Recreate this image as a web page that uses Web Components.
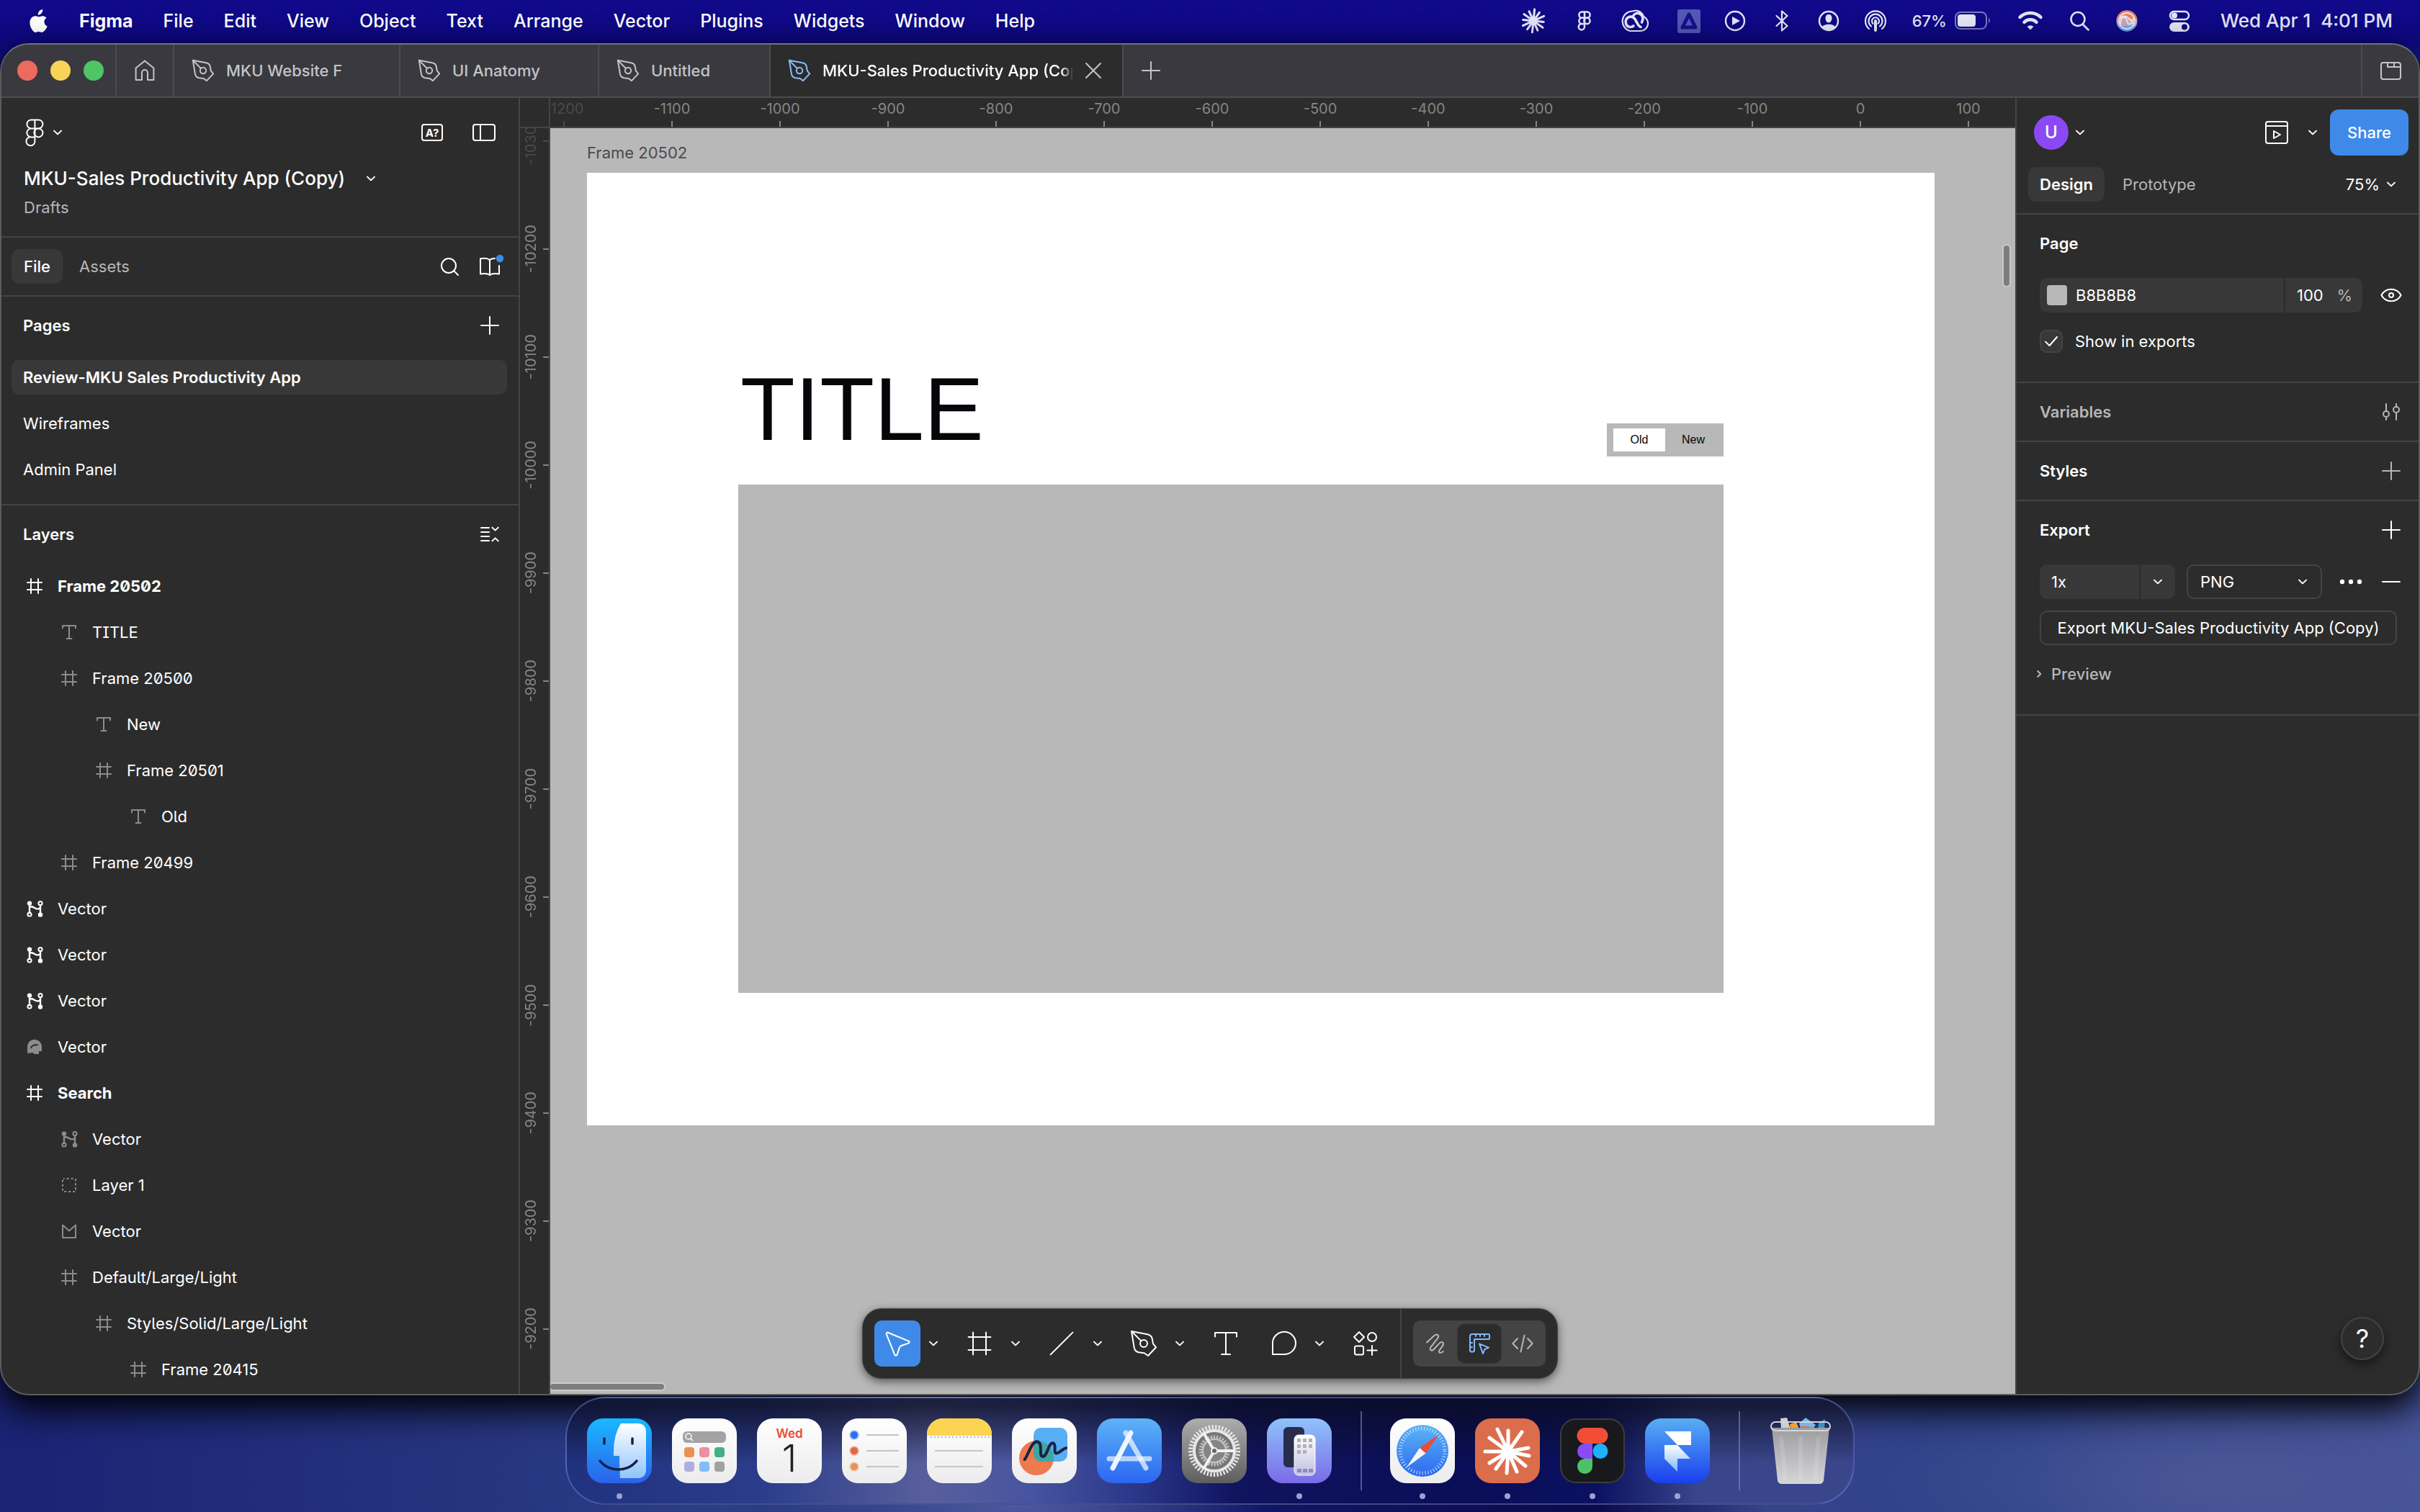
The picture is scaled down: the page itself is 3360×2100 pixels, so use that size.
<!DOCTYPE html>
<html lang="en">
<head>
<meta charset="utf-8">
<title>MKU-Sales Productivity App (Copy)</title>
<style>
	html, body {
		margin: 0;
		height: 100%;
	}
	body {
		font-family: Inter, "Liberation Sans", sans-serif;
		font-size: 22px;
		line-height: 32px;
		color: #fff;
		overflow: hidden;
	}
</style>
</head>
<body>
<mac-desktop>
	<mac-menubar slot="menubar"></mac-menubar>
	<app-window>
		<tab-strip slot="tabs">
			<file-tab style="--basis: 314px">MKU Website F</file-tab>
			<file-tab style="--basis: 276px">UI Anatomy</file-tab>
			<file-tab style="--basis: 238px">Untitled</file-tab>
			<file-tab style="--basis: 490px" active>MKU-Sales Productivity App (Copy)</file-tab>
		</tab-strip>
		<file-sidebar slot="left">
			<layer-row icon="frame" top strong>Frame 20502</layer-row>
			<layer-row icon="text" depth="1">TITLE</layer-row>
			<layer-row icon="frame" depth="1">Frame 20500</layer-row>
			<layer-row icon="text" depth="2">New</layer-row>
			<layer-row icon="frame" depth="2">Frame 20501</layer-row>
			<layer-row icon="text" depth="3">Old</layer-row>
			<layer-row icon="frame" depth="1">Frame 20499</layer-row>
			<layer-row icon="vector" top>Vector</layer-row>
			<layer-row icon="vector" top>Vector</layer-row>
			<layer-row icon="vector" top>Vector</layer-row>
			<layer-row icon="shape">Vector</layer-row>
			<layer-row icon="frame" top strong>Search</layer-row>
			<layer-row icon="vector" depth="1">Vector</layer-row>
			<layer-row icon="group" depth="1">Layer 1</layer-row>
			<layer-row icon="outline" depth="1">Vector</layer-row>
			<layer-row icon="frame" depth="1">Default/Large/Light</layer-row>
			<layer-row icon="frame" depth="2">Styles/Solid/Large/Light</layer-row>
			<layer-row icon="frame" depth="3">Frame 20415</layer-row>
		</file-sidebar>
		<design-canvas>
			<tool-bar slot="toolbar"></tool-bar>
		</design-canvas>
		<design-inspector slot="right"></design-inspector>
	</app-window>
	<mac-dock slot="dock"></mac-dock>
</mac-desktop>

<script>
// name: [ width, height, viewBox, markup ]
const PEN = '<path d="M3.5 3.5 14.6 5.6Q17.4 6.2 17.9 8.8L18.5 12.2 20.5 14.6 15 20.5 12.4 18.6 8.6 18.1Q5.9 17.6 5.4 15Z"/><path d="m3.5 3.5 6.7 6.7"/><circle cx="12" cy="12" r="2.5"/>';
const FIGMA = '<path d="M12 4H9.5a3 3 0 0 0 0 6H12zM12 4h2.5a3 3 0 0 1 0 6H12zM12 10H9.5a3 3 0 0 0 0 6H12zM9.5 16a3 3 0 1 0 2.5 3v-3z"/><circle cx="14.5" cy="13" r="3"/>';
const rays = ( n, r1, r2 ) => Array.from( { length: n }, ( _, i ) => {
	const a = ( i * 2 * Math.PI ) / n + 0.1;
	const r = i % 2 ? r2 : r2 * 0.9;
	return `M${ ( Math.cos( a ) * r1 ).toFixed( 1 ) } ${ ( Math.sin( a ) * r1 ).toFixed( 1 ) }L${ ( Math.cos( a ) * r ).toFixed( 1 ) } ${ ( Math.sin( a ) * r ).toFixed( 1 ) }`;
} ).join( '' );

const ICONS = {
	// Editor chrome.
	chevron: [ 16, 48, '0 0 8 24', '<path d="m1.5 10.8 2.5 2.4 2.5-2.4"/>' ],
	'chevron-right': [ 16, 48, '0 0 8 24', '<path d="m2.6 10 2 2-2 2"/>' ],
	plus: [ 48, 48, '0 0 24 24', '<path d="M12 6v12M6 12h12"/>' ],
	minus: [ 48, 48, '0 0 24 24', '<path d="M6 12h12"/>' ],
	close: [ 32, 32, '0 0 16 16', '<path d="m3 3 10 10M13 3 3 13"/>' ],
	dots: [ 48, 48, '0 0 24 24', '<g fill="currentColor" stroke="none"><circle cx="6" cy="12" r="1.6"/><circle cx="12" cy="12" r="1.6"/><circle cx="18" cy="12" r="1.6"/></g>' ],
	home: [ 40, 40, '0 0 20 20', '<path d="M3.8 8.3 10 3.2l6.2 5.1v8.2H12v-5a2 2 0 0 0-4 0v5H3.8z"/>' ],
	nib: [ 40, 40, '0 0 24 24', `<g stroke-width="1.2">${ PEN }</g>` ],
	windows: [ 40, 40, '0 0 20 20', '<rect x="3.5" y="4.5" width="13.5" height="11.5" rx="1.5"/><path d="M8 4.5v3h9M12.5 4.5v3"/>' ],
	figma: [ 48, 48, '0 0 24 24', `<g transform="translate(.2 -.8)">${ FIGMA }</g>` ],
	missing: [ 32, 32, '0 0 16 16', '<rect x="1" y="2.5" width="14" height="11" rx="1.5"/><text x="8" y="11" text-anchor="middle" font-family="Inter" font-size="7.5" font-weight="700" fill="currentColor" stroke="none">A?</text>' ],
	panel: [ 48, 48, '0 0 24 24', '<rect x="4.5" y="6.5" width="15" height="11" rx="1.5"/><path d="M9.5 6.5v11"/>' ],
	search: [ 48, 48, '0 0 24 24', '<circle cx="11.5" cy="11.5" r="5"/><path d="m15.2 15.2 2.8 2.8"/>' ],
	library: [ 48, 48, '0 0 24 24', '<path d="M15.5 6.5c-1.8-.2-2.8.3-3.5 1.2-.9-1.1-3-1.6-6.5-1.1v10.6c3-.4 5.3-.2 6.5.9 1.2-1.1 3.5-1.3 6.5-.9v-5.700M12 7.700v10.400"/><circle cx="19" cy="6.5" r="2.6" fill="#3d8ced" stroke="none"/>' ],
	collapse: [ 48, 48, '0 0 24 24', '<path d="M6 7.5h5.5M6 10.5h5.5M6 13.5h5.5M6 16.5h5.5M13.7 7.3l2.1 2 2.1-2M13.7 16.7l2.1-2 2.1 2"/>' ],
	frame: [ 32, 32, '0 0 16 16', '<path d="M5.5 3v10M10.5 3v10M3 5.5h10M3 10.5h10"/>' ],
	text: [ 32, 32, '0 0 16 16', '<path d="M3.5 5.2V3.5h9v1.7M8 3.5v9M6.3 12.5h3.4"/>' ],
	vector: [ 32, 32, '0 0 16 16', '<path d="M4.5 4v7M12 5.5v6.5M4.5 7c1.2-.7 1.8-.5 3.5.5s2.8 1 4 0" stroke-width="1.2"/><g fill="currentColor" stroke="none"><circle cx="4.5" cy="4.3" r="1.6"/><circle cx="12" cy="12.2" r="1.6"/></g><circle cx="4.5" cy="12" r="1.3"/><circle cx="12" cy="4.3" r="1.3"/>' ],
	shape: [ 32, 32, '0 0 16 16', '<path d="M3 12.500V8a5 5 0 0 1 10-.3V11h-2v2H7.800l-1-1z" fill="currentColor" stroke="none"/><path d="M5.5 8.6c.7-1.8 2-2.2 4.5-2" stroke="#2c2c2c"/>' ],
	group: [ 32, 32, '0 0 16 16', '<rect x="3.5" y="3.5" width="9" height="9" rx=".5" stroke-linecap="butt" stroke-dasharray="1.5 1.5" stroke-dashoffset=".7"/>' ],
	outline: [ 32, 32, '0 0 16 16', '<path d="M3.5 3.8V12.500h9V3.800L8 7.700z"/>' ],
	present: [ 48, 48, '0 0 24 24', '<rect x="4.5" y="4.5" width="15" height="15" rx="1.5"/><path d="M4.5 7.5h15M10 11v5l4.5-2.5z"/>' ],
	eye: [ 48, 48, '0 0 24 24', '<path d="M5.2 12c3-5.5 10.6-5.5 13.6 0-3 5.5-10.6 5.5-13.6 0z"/><circle cx="12" cy="12" r="1.5"/>' ],
	check: [ 32, 32, '0 0 16 16', '<path d="m4 8.3 2.8 2.7 5.2-6"/>' ],
	sliders: [ 48, 48, '0 0 24 24', '<path d="M8.5 6.5v5M8.5 15.5v2M15.5 6.5v2M15.5 12.5v5"/><circle cx="8.5" cy="13.5" r="2"/><circle cx="15.5" cy="10.5" r="2"/>' ],

	// Tool bar.
	move: [ 48, 48, '0 0 24 24', '<path d="M5.4 4.4 19.8 10.3Q20.9 11 19.7 11.8L14.7 13.5Q13.8 13.9 13.4 14.8L11.8 19.8Q10.9 21 10.1 19.8L4.4 5.6Q4.1 4.2 5.4 4.4Z"/>' ],
	'frame-tool': [ 48, 48, '0 0 24 24', '<path d="M7.5 4.3v15.4M16.5 4.3v15.4M4.3 7.5h15.4M4.3 16.5h15.4"/>' ],
	line: [ 48, 48, '0 0 24 24', '<path d="M4.3 19.7 19.7 4.3"/>' ],
	pen: [ 48, 48, '0 0 24 24', PEN ],
	type: [ 48, 48, '0 0 24 24', '<path d="M4.5 7.3V4.5h15v2.8M12 4.5v15M9 19.5h6"/>' ],
	comment: [ 48, 48, '0 0 24 24', '<path d="M4.5 19.5V12a8 7.8 0 1 1 8 7.5z"/>' ],
	actions: [ 48, 48, '0 0 24 24', '<path d="M7.5 4l3.5 3.5L7.5 11 4 7.5zM16.5 13.5v6.5M13.2 16.7h6.6"/><circle cx="16.5" cy="7.5" r="3"/><rect x="4.5" y="13.7" width="6" height="6" rx="1"/>' ],
	draw: [ 48, 48, '0 0 24 24', '<path d="M5.5 11.2 10.5 6.6c2.2-1.9 4-.3 2.5 1.800l-4.800 6.200c-1.200 1.900.7 3 2.200 1.400l4-4.300c1.600-1.600 3.300-.2 2.200 1.700l-2.300 3.200c-1 1.600.4 2.700 2.600.9"/>' ],
	design: [ 40, 40, '0 0 20 20', '<path d="M16 3.5H5A1.5 1.5 0 0 0 3.5 5v9.700a1 1 0 0 0 1 1h1a1 1 0 0 0 1-1V7h9.700a.8.8 0 0 0 .8-.8V4.3a.8.8 0 0 0-1-.8zM7.500 3.500v1.500M10.500 3.500v1.500M13.500 3.500v1.500M3.500 9.500H5M3.500 12.500H5M10 10.200l6.500 2.600-2.800 1.200-1.200 3z"/>' ],
	code: [ 40, 40, '0 0 20 20', '<path d="m6.5 6.5-3.3 3.5 3.3 3.5M13.5 6.5l3.3 3.5-3.3 3.5M11.3 4.2 8.7 15.8"/>' ],

	// Menu bar.
	apple: [ 28, 34, '0 0 28 34', '<path fill="currentColor" stroke="none" d="M19.3 1c.2 2.2-.7 4.2-1.9 5.6-1.3 1.5-3 2.3-4.7 2.2-.2-2 .7-4.100 1.800-5.400C15.800 2 17.700 1.100 19.300 1zM25.700 24.500c-.9 2-1.300 2.900-2.500 4.600-1.600 2.400-3.500 3.900-5.300 3.900-1.600 0-2.200-1-4.300-1s-2.700 1-4.300 1c-1.900 0-3.500-1.800-5-4.200C.9 23.600.5 16.900 3.200 13.500c1.600-2.200 4-3.300 6-3.300 2.100 0 3.400 1.100 5 1.100s2.700-1.100 5.100-1.100c1.900 0 3.900 1 5.200 2.800-4.600 2.500-3.900 9.300 1.200 11.500z"/>' ],
	burst: [ 52, 34, '-26 -17 52 34', `<path stroke-width="3" d="${ rays( 12, 1, 16 ) }"/>` ],
	'figma-menu': [ 18, 34, '5.5 1.5 13 23', `<g stroke-width="1.8">${ FIGMA }</g>` ],
	cloud: [ 50, 34, '-25 -17 50 34', '<path stroke-width="2.2" d="M-7 14H8A10.5 10.5 0 0 0 12-6 11.5 11.5 0 0 0-3-13.5 14 14 0 0 0-7 14z"/><path stroke-width="3.6" d="M8 8.500c-2-.5-3-2-4-4L0-2.500C-2-5.500-5-6.500-8-5.500-15-3-14 7.500-7 8.500c2 .3 3.500-.3 5-1.500M-3-6c2-4 6-5.500 9.500-4 5 2 5.500 8 3 12"/>' ],
	drive: [ 28, 34, '-14 -17 28 34', '<rect x="-16" y="-16" width="32" height="33" rx="3" fill="#5358b4" stroke="none"/><path d="M0-9-9 9H9z" stroke="#16108c" stroke-width="5"/>' ],
	play: [ 28, 34, '-14 -17 28 34', '<circle r="13" stroke-width="2.4"/><path d="M-4-6v12L7 0z" fill="currentColor" stroke="none"/>' ],
	bluetooth: [ 30, 34, '-15 -17 30 34', '<path stroke-width="2.2" d="M-7.5-7 7.5 7 0 13.5v-27L7.500-7-7.500 7"/>' ],
	user: [ 28, 34, '-14 -17 28 34', '<circle r="13" stroke-width="2.4"/><path fill="currentColor" stroke="none" d="M0-9c3 0 4.5 2.3 4.5 5S3 2.5 0 2.5-4.5-1-4.5-4-3-9 0-9zM-9.500 8.500C-6 3.500 6 3.500 9.500 8.500 5 14-5 14-9.500 8.500z"/>' ],
	airdrop: [ 30, 34, '-15 -17 30 34', '<g stroke-width="2.2"><path d="M-9 11a14 14 0 1 1 18 0M-6 7.500a9.500 9.500 0 1 1 12 0M-3.500 3.800a5 5 0 1 1 7 0"/></g><path d="M0 0v13" stroke-width="4"/>' ],
	battery: [ 52, 28, '0 0 52 28', '<rect x="2" y="2" width="43" height="23" rx="7" stroke-opacity=".5" stroke-width="2"/><rect x="5" y="5" width="25" height="17" rx="4" fill="currentColor" stroke="none"/><path d="M48 9.500q3.500 4 0 8z" fill="currentColor" fill-opacity=".5" stroke="none"/>' ],
	wifi: [ 36, 34, '-18 -17 36 34', '<g stroke-width="4.5"><path d="M-14.500-5a20.500 20.500 0 0 1 29 0M-8.500 1.800a12 12 0 0 1 17 0"/></g><path d="M0 12.500-4.500 8q4.500-3.500 9 0z" fill="currentColor" stroke="none"/>' ],
	spotlight: [ 28, 34, '-14 -17 28 34', '<circle cx="-2" cy="-2.5" r="9.5" stroke-width="2.5"/><path d="m5 5 7.5 7.5" stroke-width="2.8"/>' ],
	siri: [ 32, 34, '-16 -17 32 34', '<circle r="14.5" fill="#c9a2b8" stroke="none"/><path d="M-14.2-3A14.5 14.5 0 0 1 14.2-3z" fill="#ef8055" stroke="none"/><path d="M-12.500 7.300A14.500 14.500 0 0 0 12.500 7.300z" fill="#5aa5f2" stroke="none"/><circle r="11" stroke-width="1.8"/><path d="M-9 4C-8-8-2-6 0 0s6 7 9-3M-9-4C-4-10 4-4 9 4" stroke-width="2.2"/>' ],
	control: [ 42, 34, '-21 -17 42 34', '<rect x="-13" y="-13" width="26" height="11" rx="5.5" stroke-width="2.4"/><circle cx="-7" cy="-7.5" r="4" fill="currentColor" stroke="none"/><rect x="-14" y="2" width="28" height="13" rx="6.5" fill="currentColor" stroke="none"/><circle cx="7" cy="8.5" r="4" fill="#100b80" stroke="none"/>' ],
};

// Artwork of the dock icons, each on a 90 x 90 tile.
const TILE = '<rect x="0" y="0" width="90" height="90" rx="22"';
const grad = ( id, from, to ) => `<linearGradient id="${ id }" x1="0" y1="0" x2="0" y2="1"><stop offset="0" stop-color="${ from }"/><stop offset="1" stop-color="${ to }"/></linearGradient>`;
const paper = `${ grad( 'p', '#ffffff', '#ececee' ) }${ TILE } fill="url(#p)"/>`;
const square = ( x, y, c ) => `<rect x="${ x }" y="${ y }" width="14" height="14" rx="4" fill="${ c }"/>`;
const DOCK = {
	Finder: grad( 'a', '#19b9ff', '#2b62ea' ) + grad( 'b', '#ffffff', '#8fc4fb' ) + `
		${ TILE } fill="url(#a)"/>
		<path d="M52 7h18q12 0 12 12v52q0 12-12 12H46q-1-16-1-31H37Q36 24 47 7z" fill="url(#b)"/>
		<path d="M24 28v7M63 28v7" stroke="#16233f" stroke-width="3.5" stroke-linecap="round"/>
		<path d="M18 59c13 16 38 16 51 0" fill="none" stroke="#16204a" stroke-width="3.5" stroke-linecap="round"/>`,
	Apps: paper + `
		<rect x="15" y="18" width="60" height="16" rx="6" fill="#a3a3a3"/>
		<circle cx="23" cy="25" r="4" fill="none" stroke="#fff" stroke-width="1.5"/><path d="m26 28 3 3" stroke="#fff" stroke-width="1.5"/>
		${ square( 17, 40, '#ec9050' ) }${ square( 38, 40, '#ec8fa0' ) }${ square( 59, 40, '#42b184' ) }
		${ square( 17, 60, '#b3addb' ) }${ square( 38, 60, '#83bcf8' ) }${ square( 59, 60, '#a2a2a2' ) }`,
	Calendar: paper + `
		<g font-family="Inter" text-anchor="middle"><text x="45" y="27" font-size="17" font-weight="600" fill="#ee4a35">Wed</text>
		<text x="45" y="74" font-size="52" font-weight="300" fill="#222">1</text></g>`,
	Reminders: paper + `
		<path d="M34 23h45M34 45h45M34 67h45" stroke="#c3c4c6" stroke-width="2"/>
		<g stroke-opacity=".4" stroke-width="3"><circle cx="17" cy="23" r="5.5" fill="#2f6df3" stroke="#5b9cf8"/><circle cx="17" cy="45" r="5.5" fill="#e0664a" stroke="#ee9058"/><circle cx="17" cy="67" r="5.5" fill="#e9905c" stroke="#f2b780"/></g>`,
	Notes: paper + `
		<path d="M0 24V22A22 22 0 0 1 22 0h46a22 22 0 0 1 22 22v2z" fill="#fbd551"/>
		<path d="M5 26h82" stroke="#b9b9b9" stroke-width="2" stroke-dasharray="2 3"/><path d="M11 45h67M11 67h67" stroke="#c6c7c9" stroke-width="2"/>`,
	Freeform: paper + `
		<circle cx="34" cy="55" r="24" fill="#ee7a4e"/><rect x="30" y="13" width="47" height="47" rx="10" fill="#58aef2"/><path d="M30 31.300a24 24 0 0 1 28 23.700v5H40a10 10 0 0 1-10-10z" fill="#41a5a0"/>
		<path d="M18 58c5-6 9-28 18-25 7 3 1 20 7 20 7 0 7-21 14-19 5 2 0 14 5 14 5-1 7-6 13-8" transform="rotate(2 45 45)" fill="none" stroke="#192345" stroke-width="4" stroke-linecap="round"/>`,
	'App Store': grad( 'a', '#5db4f7', '#2b66f2' ) + `
		${ TILE } fill="url(#a)"/>
		<g stroke="#eef6ff" stroke-width="7" stroke-linecap="round"><path d="M47 20 22 69" /><path d="M40 20 68 69" stroke-opacity=".75"/><path d="M17 56h56" stroke-opacity=".7"/></g>`,
	'System Settings': grad( 'a', '#adadad', '#5e5e5e' ) + `
		${ TILE } fill="url(#a)"/><circle cx="45" cy="45" r="27" fill="#777"/>
		<g fill="none" stroke="#e8e8e8"><circle cx="45" cy="45" r="33" stroke-width="6" stroke-dasharray="2.3 2.3"/><circle cx="45" cy="45" r="28" stroke-width="4"/></g>
		<circle cx="45" cy="45" r="19" fill="#8a8a8a" stroke="#c4c4c4" stroke-width="5" stroke-dasharray="2 2"/><circle cx="45" cy="45" r="16" fill="#858585" stroke="#c4c4c4" stroke-width="2"/>
		<path d="M45 45h29M45 45 30 20M45 45 30 70" stroke="#f1f1f1" stroke-width="4"/><circle cx="45" cy="45" r="4" fill="#666" stroke="#f1f1f1" stroke-width="2"/>`,
	'iPhone Mirroring': grad( 'a', '#8fc3fa', '#7a6ae8' ) + grad( 'b', '#ffffff', '#bfc0de' ) + `
		${ TILE } fill="url(#a)"/><rect x="23" y="12" width="29" height="56" rx="6" fill="#282d4d"/>
		<rect x="38" y="23" width="29" height="56" rx="6" fill="url(#b)" stroke="#fff"/>
		<g fill="#b0b0b6"><path d="M42 28h5v5h-5zM50 28h5v5h-5zM58 28h5v5h-5zM42 36h5v5h-5zM50 36h5v5h-5zM58 36h5v5h-5zM42 44h5v5h-5zM50 44h5v5h-5z"/><path fill="#8f88c5" d="M42 70h6v5h-6zM50 70h6v5h-6zM58 70h6v5h-6z"/></g>`,
	Safari: grad( 'a', '#5bb5f6', '#2c68ee' ) + paper + `
		<circle cx="45" cy="45" r="36" fill="url(#a)"/><circle cx="45" cy="45" r="31" fill="none" stroke="#cfe5fd" stroke-width="5" stroke-dasharray="1 3"/>
		<path d="M68 22 49.500 48.500 41 41z" fill="#ee4b36"/><path d="M23 68 41 41l8.500 7.500z" fill="#f4f6fa"/>`,
	Claude: `${ TILE } fill="#dc6d4c"/>
		<path d="M46 46 31 15M46 46V17M46 46 65 19M46 46 74 41M46 46 75 52M46 46 70 66M46 46 58 74M46 46 44 76M46 46 29 70M46 46 20 62M46 46 14 46M46 46 20 27" stroke="#fff" stroke-width="5" stroke-linecap="round"/>`,
	Figma: `<rect x="1" y="1" width="88" height="88" rx="21" fill="#17191d" stroke="#3c3c3e" stroke-width="2"/>
		<path d="M34.5 13H45v22H34.500a11 11 0 0 1 0-22z" fill="#f24e37"/><path d="M44.5 13h11a11 11 0 0 1 0 22h-11z" fill="#f24e37"/><path d="M34.5 35H45v21H34.500a10.500 10.500 0 0 1 0-21z" fill="#8a4bf7"/><circle cx="56" cy="45.5" r="10.5" fill="#1fb1fb"/><path d="M34.5 56H45v10.500A10.500 10.500 0 1 1 34.500 56z" fill="#4cc267"/>`,
	Framer: grad( 'a', '#58aef5', '#1a3fee' ) + grad( 'b', '#ffffff', '#7fb8f6' ) + `
		${ TILE } fill="url(#a)"/><path d="M27 18h37v19H45z" fill="#fff"/><path d="M27 37h18l18 19H45v18L27 56z" fill="url(#b)"/>`,
	Trash: grad( 'a', '#9d9d9f', '#d6d6d8' ) + `
		<path d="m17 0 9-1 5 16H18z" fill="#cfcfd1"/><path d="m30 8 9-3 5 12H31z" fill="#f0a232"/><path d="m43 7 9-8 14 10-6 8H46z" fill="#74b9f0"/><path d="M46 10 62 12 58 18H45z" fill="#ec7343"/><path d="m70 6 9-5-1 14h-9z" fill="#3a8fc8"/>
		<path d="M5 13h80l-8 73q-1 5-6 5H19q-5 0-6-5z" fill="url(#a)"/><rect x="4" y="5" width="82" height="12" rx="6" fill="none" stroke="#d5d5d7" stroke-width="2"/>
		<path d="M18 25 24 85M70 25l-5 60M45 25v60" stroke="#fff" stroke-opacity=".12" stroke-width="6"/>`,
};

/**
 * Base class: attaches a shadow root with the markup of render().
 */
class BaseElement extends HTMLElement {
	connectedCallback() {
		if ( this.shadowRoot ) {
			return;
		}
		const template = document.createElement( 'template' );
		template.innerHTML = `<style>
			:host, * { box-sizing: border-box; }
			button, input, select { font: inherit; color: inherit; background: none; border: 0; padding: 0; margin: 0; outline: 0; min-width: 0; }
			button { display: inline-flex; align-items: center; justify-content: center; white-space: nowrap; }
			a { color: inherit; text-decoration: none; }
			${ this.styles() }
		</style>${ this.render() }`;
		this.attachShadow( { mode: 'open' } );
		this.shadowRoot.appendChild( template.content.cloneNode( true ) );
	}

	styles() {
		return '';
	}

	render() {
		return '<slot></slot>';
	}
}

class UiIcon extends BaseElement {
	styles() {
		return `
			:host { display: inline-flex; flex: none; }
			svg { display: block; overflow: visible; fill: none; stroke: currentColor; stroke-width: 1; stroke-linejoin: round; stroke-linecap: round; }
		`;
	}

	render() {
		const [ width, height, box, markup ] = ICONS[ this.getAttribute( 'name' ) ];
		return `<svg width="${ width }" height="${ height }" viewBox="${ box }" aria-hidden="true">${ markup }</svg>`;
	}
}

class MacDesktop extends BaseElement {
	styles() {
		return `
			:host {
				display: flex;
				flex-direction: column;
				height: 100vh;
				background:
					linear-gradient(#100a8c 0, #0d0880 60px, transparent 160px),
					radial-gradient(ellipse 500px 160px at 92% 98%, #4a5796, transparent),
					radial-gradient(ellipse 360px 200px at 42% 99%, #4d5aa3, transparent),
					linear-gradient(90deg, #1a2374, #26347e 20%, #2c3f88 30%, #101566 52%, #0a0b4c 66%, #36448c 73%, #2c3f88 84%, #45539a);
			}
			.stage { flex: 1; min-height: 0; display: flex; }
			.dock { flex: none; height: 162px; display: flex; justify-content: center; align-items: flex-start; padding-top: 2px; position: relative; }
		`;
	}

	render() {
		return `
			<slot name="menubar"></slot>
			<main class="stage"><slot></slot></main>
			<div class="dock"><slot name="dock"></slot></div>
		`;
	}
}

class MacMenubar extends BaseElement {
	styles() {
		return `
			:host { display: flex; flex: none; height: 60px; align-items: center; justify-content: space-between; padding: 0 38px 2px 40px; font-size: 25px; font-weight: 500; }
			nav, .status { display: flex; align-items: center; white-space: pre; }
			nav { gap: 42px; }
			.status { gap: 36px; color: #e3e4f4; }
			b { font-weight: 700; }
			time { font-size: 26px; }
			.battery { display: flex; align-items: center; gap: 10px; font-size: 22px; }
		`;
	}

	render() {
		const menus = [ 'File', 'Edit', 'View', 'Object', 'Text', 'Arrange', 'Vector', 'Plugins', 'Widgets', 'Window', 'Help' ];
		const icons = [ 'burst', 'figma-menu', 'cloud', 'drive', 'play', 'bluetooth', 'user', 'airdrop' ];
		const icon = ( name ) => `<ui-icon name="${ name }"></ui-icon>`;
		return `
			<nav>
				${ icon( 'apple' ) }
				<button><b>Figma</b></button>
				${ menus.map( ( menu ) => `<button>${ menu }</button>` ).join( '' ) }
			</nav>
			<div class="status">
				${ icons.map( icon ).join( '' ) }
				<span class="battery">67%${ icon( 'battery' ) }</span>
				${ [ 'wifi', 'spotlight', 'siri', 'control' ].map( icon ).join( '' ) }
				<time>Wed Apr 1  4:01 PM</time>
			</div>
		`;
	}
}

class AppWindow extends BaseElement {
	styles() {
		return `
			:host { flex: 1; min-width: 0; display: flex; flex-direction: column; border: 2px solid #5c5c5c; border-top-color: #737376; border-radius: 40px; overflow: hidden; background: #2c2c2c; box-shadow: 0 18px 48px 2px #000; }
			.body { flex: 1; min-height: 0; display: grid; grid-template-columns: 720px 1fr 560px; }
		`;
	}

	render() {
		return `
			<slot name="tabs"></slot>
			<div class="body"><slot name="left"></slot><slot></slot><slot name="right"></slot></div>
		`;
	}
}

class TabStrip extends BaseElement {
	styles() {
		return `
			:host { display: flex; flex: none; height: 74px; background: #39393f; border-bottom: 2px solid #4c4c50; color: #c4c4c6; }
			.lights { display: flex; align-items: center; gap: 18px; padding: 0 16px 0 22px; border-right: 2px solid #4c4c50; }
			.lights button { width: 28px; height: 28px; border-radius: 50%; background: #ee6a5e; }
			.lights button:nth-child(2) { background: #f9d355; }
			.lights button:nth-child(3) { background: #4fc565; }
			.home, .overview { width: 80px; border-right: 2px solid #4c4c50; }
			.add { width: 76px; }
			.overview { margin-left: auto; border-right: 0; border-left: 2px solid #4c4c50; }
		`;
	}

	render() {
		return `
			<div class="lights">
				<button aria-label="Close"></button><button aria-label="Minimize"></button><button aria-label="Zoom"></button>
			</div>
			<button class="home" aria-label="Home"><ui-icon name="home"></ui-icon></button>
			<slot></slot>
			<button class="add" aria-label="New tab"><ui-icon name="plus"></ui-icon></button>
			<button class="overview" aria-label="All tabs"><ui-icon name="windows"></ui-icon></button>
		`;
	}
}

class FileTab extends BaseElement {
	styles() {
		return `
			:host { display: flex; flex: 0 1 var(--basis); min-width: 0; align-items: center; gap: 12px; padding: 0 24px 0 20px; border-right: 2px solid #4c4c50; font-weight: 500; white-space: nowrap; }
			:host([active]) { background: #2c2c2c; color: #fff; }
			:host([active]) .pen { color: #8cbcf8; }
			.name { flex: 1; min-width: 0; overflow: hidden; }
			:host([active]) .name { mask-image: linear-gradient(90deg, #000 calc(100% - 16px), transparent); }
			button { color: #c4c4c6; }
		`;
	}

	render() {
		const close = this.hasAttribute( 'active' ) ? '<button aria-label="Close tab"><ui-icon name="close"></ui-icon></button>' : '';
		return `<ui-icon class="pen" name="nib"></ui-icon><a href="#" class="name"><slot></slot></a>${ close }`;
	}
}

class FileSidebar extends BaseElement {
	styles() {
		return `
			:host { display: flex; flex-direction: column; min-height: 0; overflow: hidden; border-right: 2px solid #444; }
			section { border-bottom: 2px solid #444; flex: none; }
			section:last-child { border: 0; flex: 1; min-height: 0; }
			.bar { display: flex; align-items: center; height: 96px; padding: 0 24px 0 22px; }
			.bar .space { flex: 1; }
			.bar .missing { margin-right: 32px; }
			.name { display: flex; font-size: 26px; font-weight: 500; gap: 28px; height: 32px; padding-left: 31px; }
			.place { padding: 8px 31px 24px; color: #b6b6b6; }
			.tabs { display: flex; align-items: center; height: 82px; padding: 0 16px 0 14px; color: #b6b6b6; }
			.tabs .tab { height: 48px; padding: 0 17px; border-radius: 10px; }
			.tabs .on { background: #383838; color: #fff; font-weight: 500; margin-right: 6px; }
			.tabs .find { margin: 0 8px 0 auto; color: #fff; }
			.tabs .lib { color: #fff; }
			h2 { display: flex; align-items: center; justify-content: space-between; height: 80px; margin: 0; padding: 0 16px 0 30px; font-size: 22px; font-weight: 600; }
			.pages { padding-bottom: 16px; }
			.page { display: flex; align-items: center; height: 64px; padding: 8px 16px 8px 14px; }
			.page a { display: flex; align-items: center; flex: 1; height: 48px; padding: 0 16px; border-radius: 10px; }
			.page .on { background: #383838; font-weight: 600; }
		`;
	}

	render() {
		return `
			<section>
				<div class="bar">
					<button aria-label="Main menu"><ui-icon name="figma"></ui-icon></button>
					<ui-icon name="chevron"></ui-icon>
					<span class="space"></span>
					<button class="missing" aria-label="Missing fonts"><ui-icon name="missing"></ui-icon></button>
					<button aria-label="Minimize UI"><ui-icon name="panel"></ui-icon></button>
				</div>
				<button class="name">MKU-Sales Productivity App (Copy)<ui-icon name="chevron"></ui-icon></button>
				<div class="place">Drafts</div>
			</section>
			<section class="tabs">
				<button class="tab on">File</button>
				<button class="tab">Assets</button>
				<button class="find" aria-label="Find"><ui-icon name="search"></ui-icon></button>
				<button class="lib" aria-label="Libraries"><ui-icon name="library"></ui-icon></button>
			</section>
			<section class="pages">
				<h2>Pages<button aria-label="Add page"><ui-icon name="plus"></ui-icon></button></h2>
				<div class="page"><a class="on" href="#">Review-MKU Sales Productivity App</a></div>
				<div class="page"><a href="#">Wireframes</a></div>
				<div class="page"><a href="#">Admin Panel</a></div>
			</section>
			<section>
				<h2>Layers<button aria-label="Collapse layers"><ui-icon name="collapse"></ui-icon></button></h2>
				<slot></slot>
			</section>
		`;
	}
}

class LayerRow extends BaseElement {
	styles() {
		const depth = Number( this.getAttribute( 'depth' ) || 0 );
		return `
			:host { display: flex; align-items: center; gap: 16px; height: 64px; padding-left: ${ 30 + depth * 48 }px; white-space: nowrap; font-feature-settings: "zero", "ss02"; }
			:host([strong]) { font-weight: 700; }
			ui-icon { color: #8c8c8c; }
			:host([top]) ui-icon { color: #fff; }
		`;
	}

	render() {
		return `<ui-icon name="${ this.getAttribute( 'icon' ) }"></ui-icon><slot></slot>`;
	}
}

/**
 * Ruler along the top or the left side of the canvas.
 */
class CanvasRuler extends BaseElement {
	styles() {
		return `
			:host { display: flex; overflow: hidden; color: #858585; font-size: 20px; line-height: 24px; border-bottom: 2px solid #444; }
			:host([vertical]) { flex-direction: column; border-bottom: 0; border-right: 2px solid #444; }
			div { flex: none; width: 150px; height: 40px; padding-top: 3px; display: flex; flex-direction: column; align-items: center; justify-content: space-between; }
			div:first-of-type { margin-left: -56px; color: #4a4a4a; }
			i { width: 2px; height: 8px; background: currentColor; }
			:host([vertical]) div { width: 40px; height: 150px; padding: 0 0 0 3px; flex-direction: row; }
			:host([vertical]) div:first-of-type { margin: -57px 0 0; }
			:host([vertical]) span { writing-mode: vertical-rl; transform: rotate(180deg); }
			:host([vertical]) i { width: 8px; height: 2px; }
		`;
	}

	render() {
		const start = Number( this.getAttribute( 'from' ) );
		return Array.from( { length: Number( this.getAttribute( 'count' ) ) }, ( _, i ) =>
			`<div><span>${ start + i * 100 }</span><i></i></div>`
		).join( '' );
	}
}

class DesignCanvas extends BaseElement {
	styles() {
		return `
			:host { display: grid; grid-template: 42px minmax(0, 1fr) / 42px minmax(0, 1fr); min-height: 0; min-width: 0; }
			.corner { border: solid #444; border-width: 0 2px 2px 0; }
			.surface { position: relative; overflow: hidden; background: #b8b8b8; }
			.label { position: absolute; left: 51px; top: 18px; color: #4b4b4b; }
			.frame { position: absolute; left: 51px; top: 62px; width: 1871px; height: 1323px; background: #fff; color: #05050a; font-family: "Liberation Sans", sans-serif; }
			.frame > * { position: absolute; margin: 0; }
			h1 { left: 213px; top: 257px; font-size: 124px; line-height: 142px; font-weight: 400; }
			.box { left: 210px; top: 433px; width: 1368px; height: 706px; background: #b8b8b8; }
			.switch { left: 1416px; top: 348px; width: 162px; height: 46px; padding: 7px 3px 7px 9px; background: #b8b8b8; display: flex; font-size: 16px; }
			.switch span { flex: 1; display: flex; align-items: center; justify-content: center; }
			.switch span:first-child { flex: 0 0 72px; background: #fff; }
			.scroll { position: absolute; background: #7d7d7d; border: 2px solid #cacaca; border-radius: 6px; }
			.down { right: 6px; top: 161px; width: 12px; height: 60px; }
			.across { left: -2px; bottom: 4px; width: 162px; height: 12px; }
			.tools { position: absolute; left: 0; right: 0; bottom: 22px; display: flex; justify-content: center; padding-right: 202px; }
		`;
	}

	render() {
		return `
			<div class="corner"></div>
			<canvas-ruler from="-1200" count="14"></canvas-ruler>
			<canvas-ruler from="-10300" count="12" vertical></canvas-ruler>
			<div class="surface">
				<span class="label">Frame 20502</span>
				<div class="frame">
					<h1>TITLE</h1>
					<div class="switch"><span>Old</span><span>New</span></div>
					<div class="box"></div>
				</div>
				<div class="scroll down"></div>
				<div class="scroll across"></div>
				<div class="tools"><slot name="toolbar"></slot></div>
			</div>
		`;
	}
}

class ToolBar extends BaseElement {
	styles() {
		return `
			:host { display: flex; align-items: center; height: 96px; padding: 0 16px; border-radius: 26px; background: #2c2c2c; box-shadow: 0 0 1px 1px #444, 0 4px 14px rgba(0, 0, 0, .6); }
			button { height: 64px; width: 64px; border-radius: 10px; margin-right: 16px; }
			.more { width: 32px; margin-left: 2px; }
			.split { margin-right: 0; }
			.on { background: #3f8ae8; }
			.modes { display: flex; align-items: center; height: 64px; padding: 0 2px; margin-left: 16px; border-radius: 10px; background: #444; color: #b8b8b8; }
			.modes button { width: 60px; height: 54px; margin: 0; }
			.modes .cur { background: #2c2c2c; color: #82b8fa; box-shadow: 0 0 2px #222; }
			.rule { width: 2px; height: 96px; background: #444; }
		`;
	}

	render() {
		const tool = ( name, label, more, cls = '' ) => `
			<button class="${ more ? 'split' : '' } ${ cls }" aria-label="${ label }"><ui-icon name="${ name }"></ui-icon></button>
			${ more ? `<button class="more" aria-label="${ label } options"><ui-icon name="chevron"></ui-icon></button>` : '' }`;
		return `
			${ tool( 'move', 'Move', true, 'on' ) }
			${ tool( 'frame-tool', 'Frame', true ) }
			${ tool( 'line', 'Line', true ) }
			${ tool( 'pen', 'Pen', true ) }
			${ tool( 'type', 'Text', false ) }
			${ tool( 'comment', 'Comment', true ) }
			${ tool( 'actions', 'Actions', false ) }
			<div class="rule"></div>
			<div class="modes">
				<button aria-label="Draw"><ui-icon name="draw"></ui-icon></button>
				<button class="cur" aria-label="Design"><ui-icon name="design"></ui-icon></button>
				<button aria-label="Dev Mode"><ui-icon name="code"></ui-icon></button>
			</div>
		`;
	}
}

class DesignInspector extends BaseElement {
	styles() {
		return `
			:host { position: relative; display: block; border-left: 2px solid #444; min-height: 0; overflow: hidden; }
			section { border-bottom: 2px solid #444; padding-left: 32px; }
			.fields { padding-bottom: 24px; }
			.head { padding: 0 14px 16px 16px; }
			.row { display: flex; align-items: center; height: 64px; padding-right: 14px; }
			.top { height: 96px; padding: 0 0 0 8px; }
			.avatar { width: 48px; height: 48px; border-radius: 50%; background: #8a49f5; font-size: 24px; font-weight: 500; margin-right: 8px; }
			.play { margin: 0 18px 0 auto; }
			.share { width: 109px; height: 64px; border-radius: 12px; background: #3f8ae8; font-weight: 500; margin-left: 16px; }
			.tabs { height: 48px; padding-right: 16px; }
			.tab { height: 48px; padding: 0 16px; border-radius: 10px; color: #b6b6b6; margin-right: 9px; }
			.on { background: #383838; color: #fff; font-weight: 600; }
			.zoom { margin-left: auto; gap: 8px; }
			h2 { display: flex; align-items: center; justify-content: space-between; height: 80px; margin: 0; padding-right: 14px; font-size: 22px; font-weight: 600; }
			.dim { color: #b6b6b6; }
			.field { display: flex; align-items: center; height: 48px; border-radius: 10px; background: #383838; flex: 1; min-width: 0; }
			.swatch { flex: none; width: 28px; height: 28px; border-radius: 4px; background: #b8b8b8; margin: 0 12px 0 10px; }
			.hex { flex: 1; }
			.alpha { display: flex; flex: none; height: 48px; align-items: center; border-left: 2px solid #2c2c2c; padding: 0 14px 0 16px; width: 109px; justify-content: space-between; }
			.alpha input { width: 48px; }
			.eye { margin-left: 16px; }
			.check { gap: 17px; }
			.box { display: grid; width: 32px; height: 32px; }
			.box > * { grid-area: 1 / 1; margin: 0; }
			.box input { appearance: none; width: 32px; height: 32px; border: 2px solid #444; border-radius: 9px; background: #383838; }
			.box ui-icon { pointer-events: none; }
			.scale { flex: none; width: 188px; margin-right: 16px; }
			.scale input { flex: 1; padding-left: 16px; }
			.scale button { flex: none; width: 50px; height: 48px; border-left: 2px solid #2c2c2c; }
			.type { display: grid; align-items: center; width: 188px; height: 48px; margin-right: 16px; }
			.type > * { grid-area: 1 / 1; }
			.type select { appearance: none; height: 48px; padding-left: 17px; border: 2px solid #444; border-radius: 10px; }
			.type ui-icon { justify-self: end; margin-right: 19px; pointer-events: none; }
			.type + button { margin-right: 8px; }
			.export { flex: 1; height: 48px; margin-right: 16px; border: 2px solid #444; border-radius: 10px; }
			.preview { gap: 8px; margin-left: -8px; font-weight: 500; color: #b6b6b6; }
			.help { position: absolute; right: 48px; bottom: 47px; width: 60px; height: 60px; border: 2px solid #444; border-radius: 50%; font-size: 36px; background: #2c2c2c; box-shadow: 0 6px 14px rgba(0, 0, 0, .5); }
		`;
	}

	render() {
		return `
			<section class="head">
				<div class="row top">
					<button class="avatar">U</button>
					<ui-icon name="chevron"></ui-icon>
					<button class="play" aria-label="Present"><ui-icon name="present"></ui-icon></button>
					<ui-icon name="chevron"></ui-icon>
					<button class="share">Share</button>
				</div>
				<div class="row tabs">
					<button class="tab on">Design</button>
					<button class="tab">Prototype</button>
					<button class="zoom">75%<ui-icon name="chevron"></ui-icon></button>
				</div>
			</section>
			<section class="fields">
				<h2>Page</h2>
				<div class="row">
					<div class="field">
						<span class="swatch"></span>
						<input class="hex" aria-label="Page color" value="B8B8B8">
						<label class="alpha"><input aria-label="Opacity" value="100"><span class="dim">%</span></label>
					</div>
					<button class="eye" aria-label="Toggle visibility"><ui-icon name="eye"></ui-icon></button>
				</div>
				<label class="row check">
					<span class="box"><input type="checkbox" checked><ui-icon name="check"></ui-icon></span>
					Show in exports
				</label>
			</section>
			<section><h2 class="dim">Variables<button aria-label="Open variables"><ui-icon name="sliders"></ui-icon></button></h2></section>
			<section><h2>Styles<button class="dim" aria-label="Add style"><ui-icon name="plus"></ui-icon></button></h2></section>
			<section class="fields">
				<h2>Export<button aria-label="Add export"><ui-icon name="plus"></ui-icon></button></h2>
				<div class="row">
					<div class="field scale">
						<input aria-label="Scale" value="1x">
						<button aria-label="Scale options"><ui-icon name="chevron"></ui-icon></button>
					</div>
					<label class="type">
						<select aria-label="Format"><option>PNG</option></select>
						<ui-icon name="chevron"></ui-icon>
					</label>
					<button aria-label="Export settings"><ui-icon name="dots"></ui-icon></button>
					<button aria-label="Remove export"><ui-icon name="minus"></ui-icon></button>
				</div>
				<div class="row"><button class="export">Export MKU-Sales Productivity App (Copy)</button></div>
				<div class="row"><button class="preview"><ui-icon name="chevron-right"></ui-icon>Preview</button></div>
			</section>
			<button class="help" aria-label="Help">?</button>
		`;
	}
}

class DockItem extends BaseElement {
	styles() {
		return `
			:host { position: relative; display: block; width: 90px; height: 90px; }
			a, svg { display: block; width: 90px; height: 90px; overflow: visible; }
			i { position: absolute; left: 41px; top: 104px; width: 8px; height: 8px; border-radius: 50%; background: #9d9fd6; }
		`;
	}

	render() {
		const name = this.getAttribute( 'name' );
		return `
			<a href="#" aria-label="${ name }"><svg viewBox="0 0 90 90" aria-hidden="true">${ DOCK[ name ] }</svg></a>
			${ this.hasAttribute( 'running' ) ? '<i></i>' : '' }
		`;
	}
}

class MacDock extends BaseElement {
	styles() {
		return `
			:host {
				display: flex; gap: 28px; height: 150px; padding: 28px; border: 2px solid rgba(120, 130, 220, .5); border-radius: 56px;
				background:
					linear-gradient(rgba(10, 12, 30, .75) 10px, rgba(10, 12, 30, 0) 90px),
					linear-gradient(90deg, #20327e, #2b3c8a 15%, #585f9c 28%, #47549f 36%, #2b388a 44%, #10145f 52%, #0a0e58 70%, #0b1160 80%, #39468c 88%, #3a468c);
			}
			hr { width: 2px; height: 110px; margin: -10px 11px -10px 12px; border: 0; background: rgba(130, 135, 190, .6); }
		`;
	}

	render() {
		const item = ( name, running ) => `<dock-item name="${ name }" ${ running ? 'running' : '' }></dock-item>`;
		return `
			${ item( 'Finder', true ) }${ item( 'Apps' ) }${ item( 'Calendar' ) }${ item( 'Reminders' ) }${ item( 'Notes' ) }${ item( 'Freeform' ) }
			${ item( 'App Store' ) }${ item( 'System Settings' ) }${ item( 'iPhone Mirroring', true ) }
			<hr>
			${ item( 'Safari', true ) }${ item( 'Claude', true ) }${ item( 'Figma', true ) }${ item( 'Framer', true ) }
			<hr>
			${ item( 'Trash' ) }
		`;
	}
}

Object.entries( {
	'ui-icon': UiIcon,
	'mac-desktop': MacDesktop,
	'mac-menubar': MacMenubar,
	'app-window': AppWindow,
	'tab-strip': TabStrip,
	'file-tab': FileTab,
	'file-sidebar': FileSidebar,
	'layer-row': LayerRow,
	'canvas-ruler': CanvasRuler,
	'design-canvas': DesignCanvas,
	'tool-bar': ToolBar,
	'design-inspector': DesignInspector,
	'dock-item': DockItem,
	'mac-dock': MacDock,
} ).forEach( ( [ name, element ] ) => {
	if ( ! window.customElements.get( name ) ) {
		window.customElements.define( name, element );
	}
} );
</script>
</body>
</html>
